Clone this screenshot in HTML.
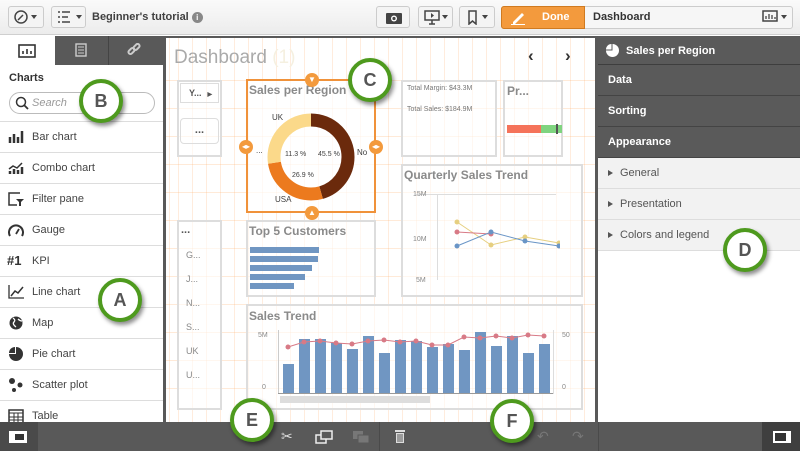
<!DOCTYPE html>
<html><head><style>
*{box-sizing:border-box;margin:0;padding:0}
body{width:800px;height:451px;overflow:hidden;position:relative;font-family:"Liberation Sans",sans-serif;background:#fff;font-size:11px;color:#404040}
.a{position:absolute}
.btn{position:absolute;top:6px;height:22px;border:1px solid #ccc;border-radius:3px;background:#f4f4f4}
.li{position:absolute;left:0;width:163px;height:31px;border-bottom:1px solid #ddd;padding-left:32px;line-height:30px;font-size:11px;color:#444}
.ic{position:absolute;left:8px;top:8px;width:16px;height:14px}
.rp{position:absolute;left:598px;width:202px;height:31px;line-height:30px;padding-left:10px;font-size:11px;font-weight:bold}
.dk{background:#5a5a5a;color:#fff;border-bottom:1px solid #444}
.lt{background:#f2f2f2;color:#555;border-bottom:1px solid #ddd;font-weight:normal;padding-left:22px}
.lt:before{content:"";position:absolute;left:10px;top:12px;border-left:5px solid #555;border-top:3.5px solid transparent;border-bottom:3.5px solid transparent}
.card{position:absolute;border:2px solid #ddd;background:rgba(255,255,255,.6)}
.ttl{position:absolute;font-weight:bold;color:#8a8a8a;font-size:12px}
.circ{position:absolute;width:44px;height:44px;border-radius:50%;background:#fff;border:4px solid #4e9a1e;box-shadow:2px 3px 4px rgba(0,0,0,.45);text-align:center;line-height:36px;font-weight:bold;font-size:18px;color:#555}
.h{position:absolute;width:14px;height:14px;border-radius:50%;background:#f39a3d;color:#fff;font-size:8px;text-align:center;line-height:14px}
</style></head><body>
<div class="a" style="left:0;top:0;width:800px;height:35px;background:linear-gradient(#fafafa,#ececec);border-bottom:1px solid #cfcfcf"></div>
<div class="btn" style="left:8px;width:36px"><svg class="a" style="left:5px;top:3px" width="26" height="14"><circle cx="7" cy="7" r="6" fill="none" stroke="#444" stroke-width="1.5"/><path d="M4 10L9 5" stroke="#444" stroke-width="1.5"/><path d="M17 5h6l-3 4z" fill="#444"/></svg></div>
<div class="btn" style="left:51px;width:35px"><svg class="a" style="left:6px;top:4px" width="26" height="12"><path d="M0 1h2M4 1h8M0 6h2M4 6h6M0 11h2M4 11h8" stroke="#444" stroke-width="1.5"/><path d="M18 4h6l-3 4z" fill="#444"/></svg></div>
<div class="a" style="left:92px;top:11px;font-weight:bold;font-size:11px;color:#404040">Beginner's tutorial <span style="display:inline-block;width:11px;height:11px;border-radius:50%;background:#888;color:#fff;font-size:8px;text-align:center;line-height:11px">i</span></div>
<div class="btn" style="left:376px;width:34px"><svg class="a" style="left:9px;top:4px" width="16" height="13"><rect x="0" y="2" width="16" height="11" rx="1" fill="#444"/><circle cx="8" cy="7.5" r="3" fill="#fff"/><circle cx="8" cy="7.5" r="1.6" fill="#444"/></svg></div>
<div class="btn" style="left:418px;width:35px"><svg class="a" style="left:5px;top:3px" width="26" height="15"><rect x="1" y="1" width="14" height="9" fill="none" stroke="#444" stroke-width="1.5"/><path d="M7 3v5l3-2.5z" fill="#444"/><path d="M8 10v4M5 14h6" stroke="#444" stroke-width="1.5"/><path d="M18 5h6l-3 4z" fill="#444"/></svg></div>
<div class="btn" style="left:459px;width:36px"><svg class="a" style="left:7px;top:3px" width="24" height="15"><path d="M2 1h7v13l-3.5-3-3.5 3z" fill="none" stroke="#444" stroke-width="1.5"/><path d="M15 5h6l-3 4z" fill="#444"/></svg></div>
<div class="a" style="left:501px;top:6px;width:292px;height:23px;border:1px solid #ccc;border-radius:3px;background:#f6f6f6"></div>
<div class="a" style="left:501px;top:6px;width:84px;height:23px;background:#f39a3d;border:1px solid #d07a20;border-radius:3px 0 0 3px;color:#fff;font-weight:bold;font-size:11px;line-height:21px;padding-left:40px">Done<svg class="a" style="left:9px;top:4px" width="16" height="14"><path d="M2 11L11 2l2 2-9 9H2z" fill="#fff"/><path d="M0 13.5h14" stroke="#fff"/></svg></div>
<div class="a" style="left:593px;top:11px;font-weight:bold;font-size:11px;color:#333">Dashboard</div>
<svg class="a" style="left:762px;top:10px" width="28" height="14"><rect x="1" y="1" width="14" height="10" fill="none" stroke="#444" stroke-width="1.5"/><path d="M4 9V6M7 9V4M10 9V5M13 9V7" stroke="#444" stroke-width="1.3"/><path d="M19 5h6l-3 4z" fill="#444"/></svg>
<div class="a" style="left:0;top:36px;width:163px;height:386px;background:#fff"></div>
<div class="a" style="left:55px;top:36px;width:108px;height:29px;background:#595959"></div>
<div class="a" style="left:108px;top:36px;width:1px;height:29px;background:#444"></div>
<svg class="a" style="left:18px;top:44px" width="18" height="14"><rect x="1" y="1" width="16" height="12" fill="none" stroke="#333" stroke-width="1.6"/><path d="M5 10V7M9 10V5M13 10V7" stroke="#333" stroke-width="1.6"/></svg>
<svg class="a" style="left:75px;top:43px" width="12" height="14"><rect x="1" y="1" width="10" height="12" fill="none" stroke="#ccc" stroke-width="1.4"/><path d="M3 4h6M3 7h6M3 10h6" stroke="#ccc"/></svg>
<svg class="a" style="left:127px;top:43px" width="14" height="14"><g fill="none" stroke="#ccc" stroke-width="2"><rect x="1" y="6" width="7" height="4" rx="2" transform="rotate(-45 4.5 8)"/><rect x="6" y="2" width="7" height="4" rx="2" transform="rotate(-45 9.5 4)"/></g></svg>
<div class="a" style="left:9px;top:72px;font-weight:bold;font-size:11px;color:#333">Charts</div>
<div class="a" style="left:9px;top:92px;width:146px;height:22px;border:1px solid #bbb;border-radius:11px;padding-left:22px;line-height:20px;color:#999;font-style:italic;font-size:11px">Search<svg class="a" style="left:5px;top:3px" width="14" height="14"><circle cx="6" cy="6" r="4.5" fill="none" stroke="#333" stroke-width="1.5"/><path d="M9 9l4 4" stroke="#333" stroke-width="1.8"/></svg></div>
<div class="a" style="left:0;top:121px;width:163px;height:1px;background:#ddd"></div>
<div class="li" style="top:122px"><svg class="ic" viewBox="0 0 16 14"><path d="M2 13V7M6 13V4M10 13V7M14 13V1" stroke="#333" stroke-width="2.5"/></svg>Bar chart</div>
<div class="li" style="top:153px"><svg class="ic" viewBox="0 0 16 14"><path d="M2 13V10M6 13V8M10 13V9M14 13V6" stroke="#333" stroke-width="2.5"/><path d="M1 8l4-3 4 2 5-5" stroke="#333" stroke-width="1.5" fill="none"/></svg>Combo chart</div>
<div class="li" style="top:184px"><svg class="ic" viewBox="0 0 16 14"><path d="M12 1H1v12h8" stroke="#333" stroke-width="1.5" fill="none"/><path d="M8 7h8l-3 3v4h-2v-4z" fill="#333"/></svg>Filter pane</div>
<div class="li" style="top:215px"><svg class="ic" viewBox="0 0 16 14"><path d="M2 13A7 7 0 1 1 14 13" stroke="#333" stroke-width="2" fill="none"/><path d="M8 11l3-5" stroke="#333" stroke-width="1.8"/></svg>Gauge</div>
<div class="li" style="top:246px"><span class="a" style="left:7px;font-weight:bold;font-size:13px;color:#333">#1</span>KPI</div>
<div class="li" style="top:277px"><svg class="ic" viewBox="0 0 16 14"><path d="M1 0v13h15" stroke="#333" stroke-width="1.3" fill="none"/><path d="M3 11l4-5 3 2 5-6" stroke="#333" stroke-width="1.5" fill="none"/></svg>Line chart</div>
<div class="li" style="top:308px"><svg class="ic" viewBox="0 0 16 14"><circle cx="8" cy="7" r="6.5" fill="#333"/><path d="M5 2q3 2 1 4t2 5M10 3q2 2 4 2" stroke="#fff" stroke-width="1.3" fill="none"/></svg>Map</div>
<div class="li" style="top:339px"><svg class="ic" viewBox="0 0 16 14"><path d="M8 7V0A7 7 0 1 1 1 7z" fill="#333"/><path d="M7 6H1a6 6 0 0 1 6-6z" fill="#333"/></svg>Pie chart</div>
<div class="li" style="top:370px"><svg class="ic" viewBox="0 0 16 14"><circle cx="4" cy="3" r="3" fill="#333"/><circle cx="12" cy="7" r="2.5" fill="#333"/><circle cx="6" cy="12" r="2" fill="#333"/></svg>Scatter plot</div>
<div class="li" style="top:401px;border:0"><svg class="ic" viewBox="0 0 16 14"><rect x="1" y="1" width="14" height="13" fill="none" stroke="#333" stroke-width="1.5"/><path d="M1 4h14M1 8h14M1 11h14M6 4v10M10 4v10" stroke="#333"/></svg>Table</div>
<div class="a" style="left:163px;top:36px;width:435px;height:386px;background:#595959"></div>
<div class="a" style="left:166px;top:38px;width:429px;height:384px;background:#fff;background-image:repeating-linear-gradient(90deg,rgba(255,170,100,.22) 0 1px,transparent 1px 14px);background-position:12px 0"></div>
<div class="a" style="left:166px;top:80px;width:429px;height:330px;background:repeating-linear-gradient(180deg,rgba(255,170,100,.25) 0 1px,transparent 1px 28px)"></div>
<div class="a" style="left:174px;top:47px;font-size:19px;color:#aaa">Dashboard <span style="color:#f5f0e0">(1)</span></div>
<div class="a" style="left:528px;top:46px;font-size:17px;font-weight:bold;color:#333">‹</div>
<div class="a" style="left:565px;top:46px;font-size:17px;font-weight:bold;color:#333">›</div>
<div class="card" style="left:177px;top:80px;width:45px;height:77px"></div>
<div class="a" style="left:180px;top:83px;width:39px;height:20px;border:1px solid #ddd;font-size:9px;font-weight:bold;color:#555;padding:4px 0 0 8px">Y...<span style="font-size:6px;margin-left:6px">▶</span></div>
<div class="a" style="left:180px;top:118px;width:39px;height:26px;border:1px solid #ddd;border-radius:4px;text-align:center;font-weight:bold;color:#555;line-height:22px">...</div>
<div class="a" style="left:246px;top:79px;width:130px;height:134px;border:2px solid #f0923a;background:rgba(255,255,255,.7)"></div>
<div class="ttl" style="left:249px;top:83px">Sales per Region</div>
<svg class="a" style="left:266px;top:112px" width="90" height="90" viewBox="0 0 90 90"><g fill="none" stroke-width="13"><circle cx="45" cy="45" r="37" stroke="#6b2a0c" stroke-dasharray="105.8 232.5" transform="rotate(-90 45 45)"/><circle cx="45" cy="45" r="37" stroke="#ec7a1e" stroke-dasharray="62.5 232.5" stroke-dashoffset="-105.8" transform="rotate(-90 45 45)"/><circle cx="45" cy="45" r="37" stroke="#fbd98a" stroke-dasharray="64.2 232.5" stroke-dashoffset="-168.3" transform="rotate(-90 45 45)"/></g></svg>
<div class="a" style="left:272px;top:113px;font-size:8px">UK</div>
<div class="a" style="left:285px;top:151px;font-size:7px">11.3 %</div>
<div class="a" style="left:318px;top:151px;font-size:7px">45.5 %</div>
<div class="a" style="left:292px;top:172px;font-size:7px">26.9 %</div>
<div class="a" style="left:275px;top:195px;font-size:8px">USA</div>
<div class="a" style="left:357px;top:148px;font-size:8px">No</div>
<div class="a" style="left:256px;top:146px;font-size:8px">...</div>
<div class="h" style="left:305px;top:73px">▼</div>
<div class="h" style="left:305px;top:206px">▲</div>
<div class="h" style="left:239px;top:140px">◂▸</div>
<div class="h" style="left:369px;top:140px">◂▸</div>
<div class="card" style="left:401px;top:80px;width:96px;height:77px"></div>
<div class="a" style="left:407px;top:85px;font-size:7px;color:#777">Total Margin: $43.3M</div>
<div class="a" style="left:407px;top:106px;font-size:7px;color:#777">Total Sales: $184.9M</div>
<div class="card" style="left:503px;top:80px;width:60px;height:77px"></div>
<div class="ttl" style="left:507px;top:84px">Pr...</div>
<div class="a" style="left:507px;top:125px;width:34px;height:8px;background:#f5735a"></div>
<div class="a" style="left:541px;top:125px;width:21px;height:8px;background:#7fd47f"></div>
<div class="a" style="left:556px;top:124px;width:2px;height:10px;background:#555"></div>
<div class="card" style="left:401px;top:164px;width:182px;height:133px"></div>
<div class="ttl" style="left:404px;top:168px">Quarterly Sales Trend</div>
<div class="a" style="left:416px;top:194px;width:140px;height:1px;background:#ddd"></div>
<div class="a" style="left:437px;top:195px;width:1px;height:85px;background:#ddd"></div>
<div class="a" style="left:413px;top:191px;font-size:7px;color:#888">15M</div>
<div class="a" style="left:413px;top:236px;font-size:7px;color:#888">10M</div>
<div class="a" style="left:416px;top:277px;font-size:7px;color:#888">5M</div>
<svg class="a" style="left:450px;top:215px" width="110" height="40"><g fill="none" stroke-width="1"><path d="M7 7L41 30 75 22 109 28" stroke="#e6cf80"/><path d="M7 17L41 19" stroke="#d87a86"/><path d="M7 31L41 17 75 26 109 31" stroke="#6a95c6"/></g><g fill="#e6cf80"><circle cx="7" cy="7" r="2.5"/><circle cx="41" cy="30" r="2.5"/><circle cx="75" cy="22" r="2.5"/><circle cx="109" cy="28" r="2.5"/></g><g fill="#d87a86"><circle cx="7" cy="17" r="2.5"/><circle cx="41" cy="19" r="2.5"/></g><g fill="#6a95c6"><circle cx="7" cy="31" r="2.5"/><circle cx="41" cy="17" r="2.5"/><circle cx="75" cy="26" r="2.5"/><circle cx="109" cy="31" r="2.5"/></g></svg>
<div class="card" style="left:246px;top:220px;width:130px;height:77px"></div>
<div class="ttl" style="left:249px;top:224px">Top 5 Customers</div>
<div class="a" style="left:250px;top:247px;width:69px;height:6px;background:#7096c2"></div>
<div class="a" style="left:250px;top:256px;width:68px;height:6px;background:#7096c2"></div>
<div class="a" style="left:250px;top:265px;width:62px;height:6px;background:#7096c2"></div>
<div class="a" style="left:250px;top:274px;width:55px;height:6px;background:#7096c2"></div>
<div class="a" style="left:250px;top:283px;width:44px;height:6px;background:#7096c2"></div>
<div class="card" style="left:177px;top:220px;width:45px;height:190px"></div>
<div class="a" style="left:181px;top:224px;font-weight:bold;color:#555">...</div>
<div class="a" style="left:186px;top:250px;font-size:9px;color:#888">G...</div>
<div class="a" style="left:186px;top:274px;font-size:9px;color:#888">J...</div>
<div class="a" style="left:186px;top:298px;font-size:9px;color:#888">N...</div>
<div class="a" style="left:186px;top:322px;font-size:9px;color:#888">S...</div>
<div class="a" style="left:186px;top:346px;font-size:9px;color:#888">UK</div>
<div class="a" style="left:186px;top:370px;font-size:9px;color:#888">U...</div>
<div class="card" style="left:246px;top:304px;width:337px;height:106px"></div>
<div class="ttl" style="left:249px;top:309px">Sales Trend</div>
<div class="a" style="left:258px;top:332px;font-size:7px;color:#888">5M</div>
<div class="a" style="left:262px;top:384px;font-size:7px;color:#888">0</div>
<div class="a" style="left:562px;top:332px;font-size:7px;color:#888">50</div>
<div class="a" style="left:562px;top:384px;font-size:7px;color:#888">0</div>
<div class="a" style="left:278px;top:330px;width:1px;height:64px;background:#ccc"></div>
<div class="a" style="left:278px;top:393px;width:276px;height:1px;background:#999"></div>
<div class="a" style="left:553px;top:330px;width:1px;height:64px;background:#ddd"></div>
<svg class="a" style="left:280px;top:330px" width="274" height="64"><g fill="#7096c2"><rect x="3" y="34" width="11" height="29"/><rect x="19" y="9" width="11" height="54"/><rect x="35" y="9" width="11" height="54"/><rect x="51" y="13" width="11" height="50"/><rect x="67" y="19" width="11" height="44"/><rect x="83" y="6" width="11" height="57"/><rect x="99" y="23" width="11" height="40"/><rect x="115" y="10" width="11" height="53"/><rect x="131" y="11" width="11" height="52"/><rect x="147" y="17" width="11" height="46"/><rect x="163" y="14" width="11" height="49"/><rect x="179" y="20" width="11" height="43"/><rect x="195" y="2" width="11" height="61"/><rect x="211" y="16" width="11" height="47"/><rect x="227" y="6" width="11" height="57"/><rect x="243" y="23" width="11" height="40"/><rect x="259" y="14" width="11" height="49"/></g><path d="M8 17L24 12 40 11 56 13 72 14 88 11 104 10 120 12 136 11 152 15 168 15 184 7 200 8 216 6 232 8 248 5 264 6" stroke="#d87a86" fill="none"/><g fill="#d87a86"><circle cx="8" cy="17" r="2.5"/><circle cx="24" cy="12" r="2.5"/><circle cx="40" cy="11" r="2.5"/><circle cx="56" cy="13" r="2.5"/><circle cx="72" cy="14" r="2.5"/><circle cx="88" cy="11" r="2.5"/><circle cx="104" cy="10" r="2.5"/><circle cx="120" cy="12" r="2.5"/><circle cx="136" cy="11" r="2.5"/><circle cx="152" cy="15" r="2.5"/><circle cx="168" cy="15" r="2.5"/><circle cx="184" cy="7" r="2.5"/><circle cx="200" cy="8" r="2.5"/><circle cx="216" cy="6" r="2.5"/><circle cx="232" cy="8" r="2.5"/><circle cx="248" cy="5" r="2.5"/><circle cx="264" cy="6" r="2.5"/></g></svg>
<div class="a" style="left:280px;top:396px;width:150px;height:7px;background:#ddd"></div>
<div class="rp dk" style="top:36px;height:29px;padding-left:28px;border-bottom:1px solid #3e3e3e">Sales per Region<svg class="a" style="left:8px;top:8px" width="13" height="13"><path d="M6.5 6.5V0A6.5 6.5 0 1 1 0 6.5z" fill="#fff"/><path d="M5.5 5.5H0A5.5 5.5 0 0 1 5.5 0z" fill="#fff"/></svg></div>
<div class="rp dk" style="top:65px">Data</div>
<div class="rp dk" style="top:96px">Sorting</div>
<div class="rp dk" style="top:127px">Appearance</div>
<div class="rp lt" style="top:158px">General</div>
<div class="rp lt" style="top:189px">Presentation</div>
<div class="rp lt" style="top:220px">Colors and legend</div>
<div class="a" style="left:0;top:422px;width:800px;height:29px;background:#595959"></div>
<div class="a" style="left:0;top:422px;width:38px;height:29px;background:#4a4a4a"></div>
<div class="a" style="left:9px;top:431px;width:18px;height:12px;background:#fff;border:1px solid #fff"><div style="margin:2px 2px 2px 5px;height:6px;background:#333"></div></div>
<div class="a" style="left:762px;top:422px;width:38px;height:29px;background:#3f3f3f"></div>
<div class="a" style="left:773px;top:431px;width:18px;height:12px;background:#fff"><div style="margin:2px 5px 2px 2px;height:8px;background:#333"></div></div>
<div class="a" style="left:598px;top:422px;width:1px;height:29px;background:#4a4a4a"></div>
<div class="a" style="left:379px;top:422px;width:1px;height:29px;background:#4a4a4a"></div>
<div class="a" style="left:281px;top:428px;color:#ddd;font-size:14px">✂</div>
<svg class="a" style="left:315px;top:430px" width="18" height="14"><rect x="1" y="5" width="10" height="8" fill="none" stroke="#eee" stroke-width="1.5"/><rect x="6" y="1" width="11" height="8" fill="#595959" stroke="#eee" stroke-width="1.5"/></svg>
<svg class="a" style="left:352px;top:430px" width="18" height="14"><rect x="1" y="1" width="10" height="8" fill="#777"/><rect x="6" y="5" width="11" height="8" fill="#777" stroke="#595959"/></svg>
<svg class="a" style="left:394px;top:429px" width="12" height="15"><rect x="1" y="1" width="10" height="2" fill="#ddd"/><rect x="2" y="4" width="8" height="10" fill="#ddd"/><path d="M4 5v8M6 5v8M8 5v8" stroke="#595959"/></svg>
<div class="a" style="left:537px;top:428px;color:#777;font-size:14px">↶</div>
<div class="a" style="left:572px;top:428px;color:#777;font-size:14px">↷</div>
<div class="circ" style="left:79px;top:79px">B</div>
<div class="circ" style="left:348px;top:58px">C</div>
<div class="circ" style="left:98px;top:278px">A</div>
<div class="circ" style="left:723px;top:228px">D</div>
<div class="circ" style="left:230px;top:398px">E</div>
<div class="circ" style="left:490px;top:399px">F</div>
</body></html>
